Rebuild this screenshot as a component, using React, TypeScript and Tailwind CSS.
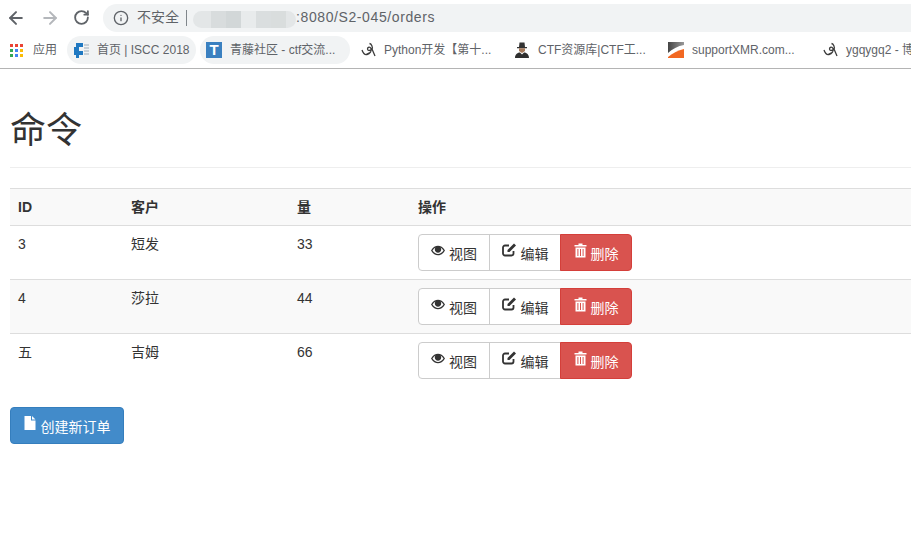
import { ArrowLeft, ArrowRight, RotateCw, Info } from 'lucide-react';

const FONT = "font-['Liberation_Sans','Noto_Sans_CJK_SC',sans-serif]";

const rows = [
  { id: '3', customer: '短发', qty: '33' },
  { id: '4', customer: '莎拉', qty: '44' },
  { id: '五', customer: '吉姆', qty: '66' },
];

function AppsIcon() {
  const colors = ['#ea4335', '#ea4335', '#ea4335', '#34a853', '#4285f4', '#fbbc05', '#34a853', '#4285f4', '#fbbc05'];
  return (
    <div className="grid grid-cols-3 gap-[2px] w-[13px] h-[13px] shrink-0">
      {colors.map((c, i) => (
        <div key={i} className="w-[3px] h-[3px]" style={{ backgroundColor: c }} />
      ))}
    </div>
  );
}

function ScriptIcon() {
  return (
    <svg width="16" height="16" viewBox="0 0 16 16" className="shrink-0">
      <path d="M1 8 C2 11 4 13 6 12.5 C9 12 11 9 10 6.5 C9 4.5 6.5 5 6.5 7 C6.5 9 9.5 9 11 7 C12 5 10.5 2 8.5 1.5 M11 7 L14 14 M5 12.5 L9 10.5" fill="none" stroke="#3c3c3c" strokeWidth="1.3" />
    </svg>
  );
}

function Bookmark({ icon, label, pill, width, gap }: { icon: React.ReactNode; label: string; pill?: boolean; width: string; gap: string }) {
  return (
    <div className={`flex items-center h-[28px] rounded-full shrink-0 pl-[6px] ${gap} ${pill ? 'bg-[#f1f3f4]' : ''} ${width}`}>
      {icon}
      <span className="text-[12px] text-[#5f6368] whitespace-nowrap">{label}</span>
    </div>
  );
}

function EyeIcon() {
  return (
    <svg width="14" height="13" viewBox="0 0 14 13" className="mb-[5px]">
      <path fillRule="evenodd" d="M0 6.5 C2 3 4.5 1.7 7 1.7 C9.5 1.7 12 3 14 6.5 C12 10 9.5 11.3 7 11.3 C4.5 11.3 2 10 0 6.5 Z M1.5 6.5 C3 8.8 5 9.9 7 9.9 C9 9.9 11 8.8 12.5 6.5 C11.6 5.1 10.6 4.2 9.6 3.6 C10 4.2 10.2 4.9 10.2 5.6 C10.2 7.4 8.8 8.8 7 8.8 C5.2 8.8 3.8 7.4 3.8 5.6 C3.8 4.9 4 4.2 4.4 3.6 C3.4 4.2 2.4 5.1 1.5 6.5 Z" fill="#333" />
    </svg>
  );
}

function EditIcon() {
  return (
    <svg width="15" height="14" viewBox="0 0 15 14" className="mb-[5px]">
      <path d="M11.5 8 V10.5 A2 2 0 0 1 9.5 12.5 H3 A2 2 0 0 1 1 10.5 V4.5 A2 2 0 0 1 3 2.5 H7" fill="none" stroke="#333" strokeWidth="1.8" />
      <path d="M5.5 7 L12 0.5 L14 2.5 L7.5 9 H5.5 Z" fill="#333" />
    </svg>
  );
}

function TrashIcon() {
  return (
    <svg width="13" height="15" viewBox="0 0 13 15" className="mb-[5px]">
      <path d="M4.5 0.5 H8.5 V2 H12.5 V3.4 H0.5 V2 H4.5 Z" fill="#fff" />
      <path fillRule="evenodd" d="M1.5 4.5 H11.5 V14.5 H1.5 Z M3.4 6 V13 H4.4 V6 Z M6 6 V13 H7 V6 Z M8.6 6 V13 H9.6 V6 Z" fill="#fff" />
    </svg>
  );
}

function FileIcon() {
  return (
    <svg width="12" height="14" viewBox="0 0 12 14" className="mb-[5px]">
      <path d="M0.5 0 H7 V4.5 H11.5 V14 H0.5 Z" fill="#fff" />
      <path d="M8 0 L11.5 3.5 H8 Z" fill="#fff" />
    </svg>
  );
}

function ActionButtons() {
  return (
    <div className="flex h-[37px] text-[14px]">
      <button className="w-[72px] flex items-center justify-center gap-[4px] bg-white border border-[#ccc] rounded-l-[4px] text-[#333]">
        <EyeIcon />
        <span className="pt-[4px]">视图</span>
      </button>
      <button className="w-[72px] -ml-px flex items-center justify-center gap-[4px] bg-white border border-[#ccc] text-[#333]">
        <EditIcon />
        <span className="pt-[4px]">编辑</span>
      </button>
      <button className="w-[72px] -ml-px flex items-center justify-center gap-[4px] bg-[#d9534f] border border-[#d43f3a] rounded-r-[4px] text-white">
        <TrashIcon />
        <span className="pt-[4px]">删除</span>
      </button>
    </div>
  );
}

export default function App() {
  return (
    <div className={`w-[911px] h-[541px] overflow-hidden bg-white ${FONT}`}>
      {/* Browser toolbar */}
      <div className="h-[36px] flex items-center pl-[6px] pb-[1px]">
        <ArrowLeft className="w-[20px] h-[20px] text-[#5f6368]" strokeWidth={2.4} />
        <ArrowRight className="w-[20px] h-[20px] text-[#b4b7bb] ml-[14px]" strokeWidth={2.4} />
        <RotateCw className="w-[17px] h-[17px] text-[#5f6368] ml-[13px]" strokeWidth={2.6} />
        <div className="ml-[13px] flex-1 h-[28px] rounded-l-full bg-[#f1f3f4] flex items-center pl-[10px]">
          <Info className="w-[16px] h-[16px] text-[#5f6368]" strokeWidth={2} />
          <span className="ml-[8px] text-[14px] text-[#5f6368]">不安全</span>
          <div className="ml-[7px] w-px h-[16px] bg-[#80868b]" />
          <div className="ml-[6px] w-[103px] h-[17px] mt-[3px] flex rounded-full overflow-hidden">
            <div className="w-[18px] bg-[#e3e6e7]" />
            <div className="w-[15px] bg-[#d8dcdd]" />
            <div className="w-[15px] bg-[#d2d7d8]" />
            <div className="w-[15px] bg-[#e8ebec]" />
            <div className="w-[15px] bg-[#dadedf]" />
            <div className="w-[15px] bg-[#d9dddd]" />
            <div className="w-[10px] bg-[#e3e6e7]" />
          </div>
          <span className="text-[14px] text-[#5f6368] tracking-[0.6px]">:8080/S2-045/orders</span>
        </div>
      </div>

      {/* Bookmarks bar */}
      <div className="h-[33px] border-b border-[#b4b4b4] flex items-start pl-[4px]">
        <Bookmark icon={<AppsIcon />} label="应用" width="w-[63px]" gap="gap-[10px]" />
        <Bookmark
          pill
          width="w-[129px]"
          gap="gap-[7px]"
          label="首页 | ISCC 2018"
          icon={
            <svg width="17" height="17" viewBox="0 0 17 17" className="shrink-0">
              <path d="M3 1 H10 V5 H6 V9 H10 V13 H6 V16 H3 V13 H1 V5 H3 Z" fill="#1f78c1" />
              <path d="M11 3 H16 M11 6 H16 M11 9 H16 M11 12 H16" stroke="#b9c4cc" strokeWidth="1.4" />
            </svg>
          }
        />
        <div className="w-[4px] shrink-0" />
        <Bookmark
          pill
          width="w-[150px]"
          gap="gap-[8px]"
          label="青藤社区 - ctf交流..."
          icon={
            <div className="w-[16px] h-[16px] bg-[#3a80c0] text-white text-[15px] font-bold leading-[16px] text-center shrink-0">T</div>
          }
        />
        <div className="w-[5px] shrink-0" />
        <Bookmark icon={<ScriptIcon />} label="Python开发【第十..." width="w-[153px]" gap="gap-[7px]" />
        <Bookmark
          width="w-[154px]"
          gap="gap-[8px]"
          label="CTF资源库|CTF工..."
          icon={
            <svg width="16" height="16" viewBox="0 0 16 16" className="shrink-0">
              <path d="M5 5 L5.5 0.5 H10.5 L11 5 H13 V6.3 H3 V5 Z" fill="#333" />
              <path d="M5 6.3 H11 V9 L8 11 L5 9 Z" fill="#a5795a" />
              <path d="M1 16 C1 12 4 10.5 6 10.5 L8 12.5 L10 10.5 C12 10.5 15 12 15 16 Z" fill="#2f2f2f" />
            </svg>
          }
        />
        <Bookmark
          width="w-[155px]"
          gap="gap-[8px]"
          label="supportXMR.com..."
          icon={
            <svg width="16" height="16" viewBox="0 0 16 16" className="shrink-0">
              <defs>
                <linearGradient id="xmr-top" x1="0" y1="0" x2="1" y2="0">
                  <stop offset="0" stopColor="#444" />
                  <stop offset="1" stopColor="#999" />
                </linearGradient>
              </defs>
              <path d="M0 0 H16 V3 C10 4 4 7 0 11 Z" fill="url(#xmr-top)" />
              <path d="M16 7 V16 H0 V15 C5 11 10 8.5 16 7 Z" fill="#f26822" />
            </svg>
          }
        />
        <Bookmark icon={<ScriptIcon />} label="ygqygq2 - 博客园" width="w-[120px]" gap="gap-[7px]" />
      </div>

      {/* Page */}
      <div className="pl-[10px]">
        <h1 className="h-[99px] border-b border-[#eee] pt-[42px] text-[36px] leading-[40px] font-normal text-[#333]">命令</h1>

        <table className="mt-[20px] w-[901px] table-fixed border-collapse text-[14px] text-[#333]">
          <thead>
            <tr className="bg-[#f9f9f9] h-[37px] border-t border-b border-[#ddd] font-bold text-left">
              <th className="w-[113px] px-[8px]">ID</th>
              <th className="w-[166px] px-[8px]">客户</th>
              <th className="w-[121px] px-[8px]">量</th>
              <th className="px-[8px]">操作</th>
            </tr>
          </thead>
          <tbody>
            {rows.map((row, i) => (
              <tr key={row.id} className={`h-[54px] border-b border-[#ddd] last:border-b-0 align-top ${i === 1 ? 'bg-[#f9f9f9]' : ''}`}>
                <td className="px-[8px] pt-[8px]">{row.id}</td>
                <td className="px-[8px] pt-[8px]">{row.customer}</td>
                <td className="px-[8px] pt-[8px]">{row.qty}</td>
                <td className="px-[8px] pt-[8px]">
                  <ActionButtons />
                </td>
              </tr>
            ))}
          </tbody>
        </table>

        <button className="mt-[19px] w-[114px] h-[37px] flex items-center justify-center gap-[5px] bg-[#428bca] border border-[#357ebd] rounded-[4px] text-white text-[14px]">
          <FileIcon />
          <span className="pt-[4px]">创建新订单</span>
        </button>
      </div>
    </div>
  );
}
